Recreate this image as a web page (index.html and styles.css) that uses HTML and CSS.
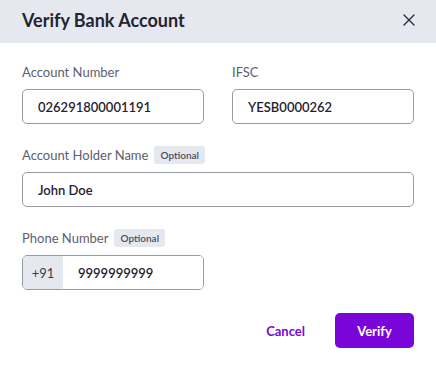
FILE: index.html
```html
<!DOCTYPE html>
<html lang="en">
<head>
  <meta charset="UTF-8" />
  <meta name="viewport" content="width=device-width, initial-scale=1.0"/>
  <title>Verify Bank Account</title>
  <link rel="stylesheet" href="styles.css">
</head>
<body>

  <div class="modal">
    <div class="modal-header">
      <h2>Verify Bank Account</h2>
      <button class="close-button" aria-label="Close">
        <svg width="12" height="12" viewBox="0 0 12 12">
          <path d="M1 1 L11 11 M11 1 L1 11" stroke="#2a2d36" stroke-width="1.4" stroke-linecap="round" fill="none"/>
        </svg>
      </button>
    </div>

    <form class="modal-body">
      <div class="two-col">
        <div class="field">
          <label class="field-label">Account Number</label>
          <input class="text-input" type="text" value="026291800001191" />
        </div>
        <div class="field">
          <label class="field-label">IFSC</label>
          <input class="text-input" type="text" value="YESB0000262" />
        </div>
      </div>

      <div class="field">
        <label class="field-label">Account Holder Name <span class="optional-tag">Optional</span></label>
        <input class="text-input" type="text" value="John Doe" />
      </div>

      <!-- phone sits in a half-width column like the account number -->
      <div class="two-col">
        <div class="field last-field">
          <label class="field-label">Phone Number <span class="optional-tag">Optional</span></label>
          <div class="phone-input">
            <span class="country-code">+91</span>
            <input type="text" value="9999999999" />
          </div>
        </div>
      </div>

      <div class="actions">
        <button type="button" class="cancel-button">Cancel</button>
        <button type="button" class="verify-button">Verify</button>
      </div>
    </form>
  </div>

</body>
</html>
```

FILE: styles.css
```css
body {
  margin: 0;
  font-family: 'Lato', 'Noto Sans', sans-serif;
  background-color: #ffffff;
  color: #1f2330;
}

.modal {
  width: 436px;
  height: 365px;
  background: white;
}

.modal-header {
  height: 43px;
  box-sizing: border-box;
  background-color: #e6e8f0;
  padding: 0 20px 4px 22px;
  display: flex;
  align-items: center;
  justify-content: space-between;
}

.modal-header h2 {
  margin: 0;
  font-size: 18px;
  font-weight: 700;
  color: #22252d;
}

.close-button {
  background: none;
  border: none;
  padding: 0;
  width: 14px;
  height: 14px;
  display: flex;
  align-items: center;
  justify-content: center;
  cursor: pointer;
}

.modal-body {
  padding: 20px 22px 0;
}

.two-col {
  display: grid;
  grid-template-columns: 182px 182px;
  column-gap: 28px;
}

.field {
  margin-bottom: 22px;
}

.last-field {
  margin-bottom: 0;
}

.field-label {
  display: flex;
  align-items: center;
  gap: 6px;
  height: 18px;
  margin-bottom: 8px;
  font-size: 13px;
  color: #5c6070;
}

.optional-tag {
  background-color: #e6e8f0;
  color: #4b4f5c;
  font-size: 10px;
  font-weight: 600;
  padding: 0 6px;
  height: 18px;
  line-height: 18px;
  border-radius: 3px;
}

.text-input {
  width: 100%;
  height: 35px;
  box-sizing: border-box;
  border: 1px solid #9a9ca4;
  border-radius: 5px;
  padding: 0 15px;
  font-family: inherit;
  font-size: 13px;
  font-weight: 600;
  color: #1f2330;
  outline: none;
}

.phone-input {
  display: flex;
  height: 35px;
  box-sizing: border-box;
  border: 1px solid #9a9ca4;
  border-radius: 5px;
  overflow: hidden;
}

.country-code {
  width: 40px;
  background-color: #e6e8f0;
  display: flex;
  align-items: center;
  justify-content: center;
  font-size: 13px;
  color: #3a3d48;
}

.phone-input input {
  flex: 1;
  min-width: 0;
  border: none;
  padding: 0 15px;
  font-family: inherit;
  font-size: 13px;
  font-weight: 600;
  color: #1f2330;
  outline: none;
}

.actions {
  display: flex;
  justify-content: flex-end;
  align-items: center;
  gap: 14px;
  margin-top: 23px;
}

.cancel-button {
  background: none;
  border: none;
  padding: 0 16px;
  height: 35px;
  font-family: inherit;
  font-size: 13px;
  font-weight: 700;
  color: #7a05d8;
  cursor: pointer;
}

.verify-button {
  width: 79px;
  height: 35px;
  background-color: #7a05d8;
  border: none;
  border-radius: 5px;
  font-family: inherit;
  font-size: 13px;
  font-weight: 700;
  color: white;
  cursor: pointer;
}
```
